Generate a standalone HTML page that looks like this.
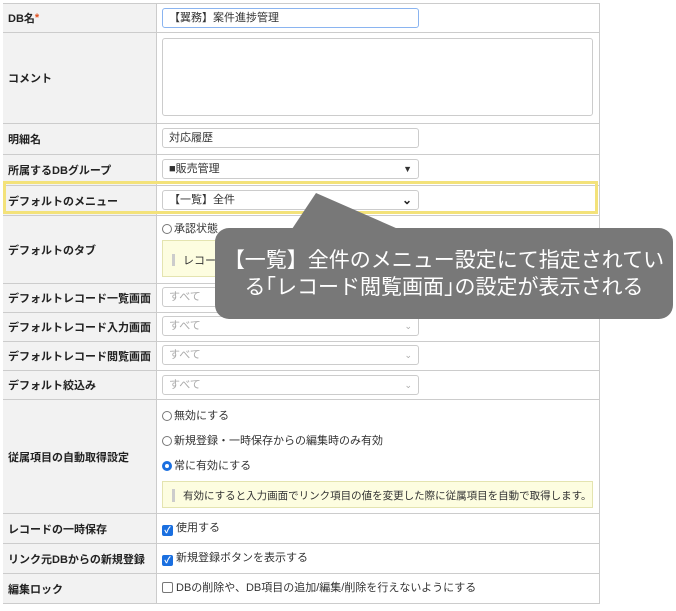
<!DOCTYPE html><html><head><meta charset="utf-8"><style>
body{margin:0;width:676px;height:611px;background:#fff;position:relative;overflow:hidden;font-family:"Liberation Sans","Noto Sans CJK JP",sans-serif;font-size:11px;color:#333}
.r{position:absolute;left:3px;width:596px;border-top:1px solid #ccc}
.l{position:absolute;left:3px;width:154px;background:#f2f2f2;border-right:1px solid #ccc;font-weight:bold;color:#222;display:flex;align-items:center;padding-left:5px;box-sizing:border-box}
.in{position:absolute;left:162px;width:257px;height:20px;border:1px solid #ccc;border-radius:3px;box-sizing:border-box;padding-left:6px;line-height:18px;font-size:11px;background:#fff}
.g{color:#aaa}
.chev{position:absolute;right:6px;top:0;font-size:9px;color:#aaa}
.t{position:absolute;left:162px;font-size:11px;line-height:14px}
.rad{display:inline-block;width:10px;height:10px;border:1px solid #777;border-radius:50%;vertical-align:-2px;margin-right:2px;box-sizing:border-box}
.cb{display:inline-block;width:11px;height:11px;border-radius:2px;vertical-align:-2px;margin-right:3px;box-sizing:border-box;color:#fff;font-size:9px;line-height:11px;text-align:center;font-weight:bold}
</style></head><body>
<div style="position:absolute;left:3px;top:3px;width:597px;height:601px;border:1px solid #ccc;box-sizing:border-box"></div>
<div class="l" style="top:4px;height:28px">DB名<span style="color:#e05020">*</span></div>
<div class="l" style="top:33px;height:90px">コメント</div>
<div class="l" style="top:124px;height:30px">明細名</div>
<div class="l" style="top:155px;height:30px">所属するDBグループ</div>
<div class="l" style="top:186px;height:29px">デフォルトのメニュー</div>
<div class="l" style="top:216px;height:67px">デフォルトのタブ</div>
<div class="l" style="top:284px;height:28px">デフォルトレコード一覧画面</div>
<div class="l" style="top:313px;height:28px">デフォルトレコード入力画面</div>
<div class="l" style="top:342px;height:28px">デフォルトレコード閲覧画面</div>
<div class="l" style="top:371px;height:28px">デフォルト絞込み</div>
<div class="l" style="top:400px;height:113px">従属項目の自動取得設定</div>
<div class="l" style="top:514px;height:29px">レコードの一時保存</div>
<div class="l" style="top:544px;height:29px">リンク元DBからの新規登録</div>
<div class="l" style="top:574px;height:29px">編集ロック</div>
<div class="r" style="top:32px"></div><div class="r" style="top:123px"></div><div class="r" style="top:154px"></div><div class="r" style="top:185px"></div><div class="r" style="top:215px"></div><div class="r" style="top:283px"></div><div class="r" style="top:312px"></div><div class="r" style="top:341px"></div><div class="r" style="top:370px"></div><div class="r" style="top:399px"></div><div class="r" style="top:513px"></div><div class="r" style="top:543px"></div><div class="r" style="top:573px"></div>

<div class="in" style="top:8px;border-color:#8ab4f0">【翼務】案件進捗管理</div>
<div style="position:absolute;left:162px;top:38px;width:431px;height:78px;border:1px solid #ccc;border-radius:3px;box-sizing:border-box"></div>
<div class="in" style="top:128px">対応履歴</div>
<div class="in" style="top:159px">■販売管理<span class="chev" style="color:#333">▼</span></div>
<div class="in" style="top:190px">【一覧】全件<span class="chev" style="color:#222;font-size:12px;font-weight:bold">⌄</span></div>
<div class="t" style="top:222px"><span class="rad"></span>承認状態</div>
<div style="position:absolute;left:162px;top:240px;width:431px;height:37px;background:#fdfde0;border:1px solid #e4e4b0;box-sizing:border-box"><span style="position:absolute;left:9px;top:13px;width:3px;height:12px;background:#ccc"></span><span style="position:absolute;left:20px;top:11px">レコード</span></div>
<div class="in g" style="top:287px">すべて<span class="chev">⌄</span></div>
<div class="in g" style="top:316px">すべて<span class="chev">⌄</span></div>
<div class="in g" style="top:345px">すべて<span class="chev">⌄</span></div>
<div class="in g" style="top:375px">すべて<span class="chev">⌄</span></div>
<div class="t" style="top:409px"><span class="rad"></span>無効にする</div>
<div class="t" style="top:434px"><span class="rad"></span>新規登録・一時保存からの編集時のみ有効</div>
<div class="t" style="top:459px"><span class="rad" style="border:3px solid #1a6fe0"></span>常に有効にする</div>
<div style="position:absolute;left:162px;top:481px;width:431px;height:27px;background:#fdfde0;border:1px solid #e4e4b0;box-sizing:border-box;font-size:10.5px"><span style="position:absolute;left:9px;top:7px;width:3px;height:13px;background:#ccc"></span><span style="position:absolute;left:20px;top:6px">有効にすると入力画面でリンク項目の値を変更した際に従属項目を自動で取得します。</span></div>
<div class="t" style="top:521px"><span class="cb" style="background:#1a6fe0">✓</span>使用する</div>
<div class="t" style="top:551px"><span class="cb" style="background:#1a6fe0">✓</span>新規登録ボタンを表示する</div>
<div class="t" style="top:581px"><span class="cb" style="border:1px solid #777"></span>DBの削除や、DB項目の追加/編集/削除を行えないようにする</div>

<div style="position:absolute;left:3px;top:181px;width:595px;height:33px;border:3px solid #f3e27a;box-sizing:border-box"></div>
<svg style="position:absolute;left:0;top:0" width="676" height="611"><polygon points="316,193 290,232 405,232" fill="#787878"/></svg>
<div style="position:absolute;left:215px;top:228px;width:458px;height:91px;background:#787878;border-radius:14px;color:#fff;font-size:21px;line-height:27px;text-align:center;padding-top:19px;box-sizing:border-box">【一覧】全件のメニュー設定にて指定されてい<br>る｢レコード閲覧画面｣の設定が表示される</div>
</body></html>
